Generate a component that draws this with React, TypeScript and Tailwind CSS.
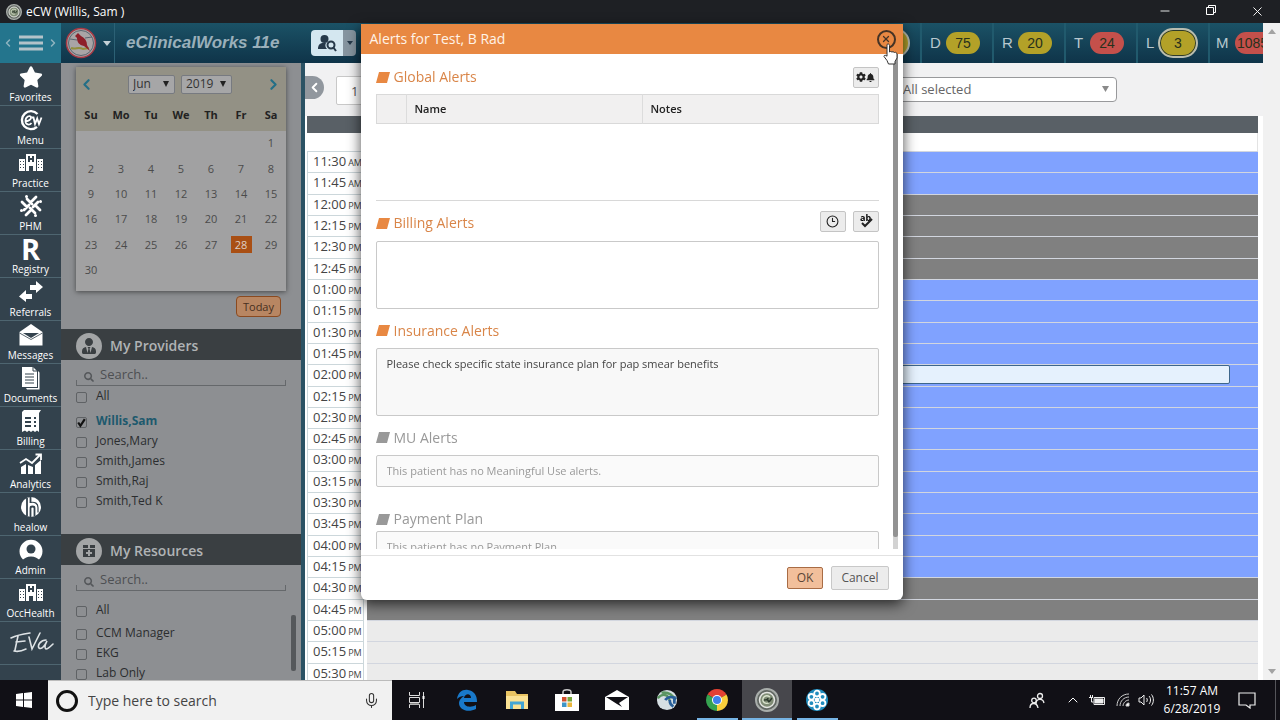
import type { ReactNode } from 'react';
import { FaStar, FaSearch, FaUserTie, FaBell, FaCog } from 'react-icons/fa';
import { ChevronLeft, ChevronRight, Mic, Minus, X, Clock3, ChevronUp } from 'lucide-react';

const days = ['Su', 'Mo', 'Tu', 'We', 'Th', 'Fr', 'Sa'];
const dates = Array.from({ length: 42 }, (_, i) => (i >= 6 && i < 36 ? i - 5 : 0));

const slotColors = { open: 'bg-[#80a2ff]', closed: 'bg-[#808080]', off: 'bg-[#ebebeb]' };

type Slot = { time: string; half: string; kind: keyof typeof slotColors };

// Quarter-hour slots from 11:30 AM
const slots: Slot[] = Array.from({ length: 25 }, (_, i) => {
  const minutes = 690 + i * 15;
  const hour = Math.floor(minutes / 60);
  const shown = hour > 12 ? hour - 12 : hour;
  const kind = i < 2 ? 'open' : i < 6 ? 'closed' : i < 20 ? 'open' : i < 22 ? 'closed' : 'off';
  return {
    time: `${String(shown).padStart(2, '0')}:${String(minutes % 60).padStart(2, '0')}`,
    half: hour < 12 ? 'AM' : 'PM',
    kind,
  };
});

const HospitalIcon = () => (
  <svg viewBox="0 0 24 20" className="h-5 w-6" fill="#fff">
    <path fillRule="evenodd" d="M7 1h10v17h-3v-5h-4v5H7zM9 3v6h2V7h2v2h2V3h-2v2h-2V3z" />
    <path fillRule="evenodd" d="M0 6h6v12H0zM1 8v1h1V8zm3 0v1h1V8zM1 11v1h1v-1zm3 0v1h1v-1zM1 14v1h1v-1zm3 0v1h1v-1zM18 6h6v12h-6zm1 2v1h1V8zm3 0v1h1V8zm-3 3v1h1v-1zm3 0v1h1v-1zm-3 3v1h1v-1zm3 0v1h1v-1z" />
  </svg>
);

const MenuLogo = () => (
  <svg viewBox="0 0 24 22" className="h-[22px] w-6" fill="none" stroke="#fff">
    <path strokeWidth="2.4" d="M18.500 5A9 9 0 1 0 18 17.800" />
    <path strokeWidth="1.8" d="M6.500 12.500c3-.5 6-2 5.500-4.500-1-2-5.500-.5-5.500 4 0 4 4 4.500 6 2" />
    <path strokeWidth="1.8" d="M12.500 8.500h2l1.500 6.500 2.200-5.500 1.800 5.500L22.500 8.500" />
  </svg>
);

const PhmIcon = () => (
  <svg viewBox="0 0 24 24" className="h-6 w-6" stroke="#fff" strokeWidth="2.8" strokeLinecap="round">
    <path d="M8 5l5 5M17 3l-5 5M19 8l-5 5M21 16l-5-5M16 19l-5-5M7 21l5-5M5 16l5-5M3 8l5 5" />
    <path strokeWidth="3" d="M7.500 2.500h.01M21.500 7.500h.01M16.500 21.500h.01M2.500 16.500h.01" />
  </svg>
);

const ReferralsIcon = () => (
  <svg viewBox="0 0 24 22" className="h-[22px] w-6" fill="#fff">
    <path d="M11 4h6V0l7 6-7 6V9h-6zM13 13H7V9l-7 6.500L7 21v-3h6z" />
  </svg>
);

const MessagesIcon = () => (
  <svg viewBox="0 0 24 22" className="h-[22px] w-6" fill="#fff">
    <path d="M.5 8L12 0l11.500 8v13.500H.5z" />
    <path d="M4 9h16l-8 5z" fill="#33424d" />
    <path d="M.5 9L12 15.500 23.500 9" fill="none" stroke="#33424d" strokeWidth=".8" />
  </svg>
);

const DocumentsIcon = () => (
  <svg viewBox="0 0 20 24" className="h-6 w-5" fill="#fff">
    <path d="M5 22h12V5l1.500 1.500V23.500H6zM1 1h11l4 4v16H1z" />
    <path stroke="#33424d" strokeWidth="1" d="M4 8h9M4 11h9M4 14h9M4 17h9M12 1v4h4" fill="none" />
  </svg>
);

const BillingIcon = () => (
  <svg viewBox="0 0 22 24" className="h-6 w-[22px]" fill="#fff">
    <path d="M4 1h17l-2 3v19l-2-1.500-2 1.500-2-1.500-2 1.500-2-1.500L7 23l-2-1.500L2 23V3z" />
    <path stroke="#33424d" strokeWidth="2" d="M5 9h6M5 13h6M5 17h6M14 9h2M14 13h2M14 17h2" />
  </svg>
);

const AnalyticsIcon = () => (
  <svg viewBox="0 0 24 24" className="h-6 w-6" fill="#fff">
    <path d="M2 15l5-3v10H2zM9 13l5 2v7H9zM16 13l6-5v14h-6z" />
    <path d="M1 11l6-4 6 4 8-8M16.500 2.500H22V8" fill="none" stroke="#fff" strokeWidth="1.800" />
  </svg>
);

const HealowIcon = () => (
  <svg viewBox="0 0 22 22" className="h-[22px] w-[22px]">
    <circle cx="11" cy="11" r="10" fill="#fff" />
    <path d="M7 2v18M10.500 1v6M10.500 21v-9c0-2 4-2 4 0v8" fill="none" stroke="#33424d" strokeWidth="1.800" />
    <path d="M10 6.500c5-1 8 1 8 5v5" fill="none" stroke="#33424d" strokeWidth="1.200" />
  </svg>
);

const AdminIcon = () => (
  <svg viewBox="0 0 24 22" className="h-[22px] w-6">
    <path d="M4 20.500A11.500 11.500 0 1 1 20 20.500c-2-1.500-4-3-8-3s-6 1.500-8 3z" fill="#fff" />
    <circle cx="12" cy="10" r="4.500" fill="#33424d" />
  </svg>
);

const EvaIcon = () => (
  <svg viewBox="0 0 46 24" className="h-6 w-[46px]" fill="none" stroke="#dde2e5" strokeWidth="1.600" strokeLinecap="round">
    <path d="M3 7C9 4 15 3 22 2M10 5L7 19M8 11l9-1M6 20c4 1 8 0 12-2M21 6l3 12L32 2M38 9c-5 0-9 5-7 8 3 2 6-3 8-7-2 4-3 7-1 8 2 0 4-2 7-5" />
  </svg>
);

const navItems: { label: string; icon: ReactNode }[] = [
  { label: 'Favorites', icon: <FaStar className="h-6 w-6 text-white" /> },
  { label: 'Menu', icon: <MenuLogo /> },
  { label: 'Practice', icon: <HospitalIcon /> },
  { label: 'PHM', icon: <PhmIcon /> },
  { label: 'Registry', icon: <span className="text-[29px] leading-6 font-bold">R</span> },
  { label: 'Referrals', icon: <ReferralsIcon /> },
  { label: 'Messages', icon: <MessagesIcon /> },
  { label: 'Documents', icon: <DocumentsIcon /> },
  { label: 'Billing', icon: <BillingIcon /> },
  { label: 'Analytics', icon: <AnalyticsIcon /> },
  { label: 'healow', icon: <HealowIcon /> },
  { label: 'Admin', icon: <AdminIcon /> },
  { label: 'OccHealth', icon: <HospitalIcon /> },
];

const EcwBall = ({ className }: { className: string }) => (
  <svg viewBox="0 0 24 24" className={className} fill="none">
    <circle cx="12" cy="12" r="11" fill="#626863" stroke="#a9aeab" strokeWidth="2" />
    <circle cx="12" cy="12" r="7.500" fill="#7f8c75" stroke="#e4e6e2" strokeWidth="1.500" />
    <path d="M15 9c-4-3-8 0-7 4 1 3 5 3 7 1" stroke="#dbe5cf" strokeWidth="1.300" />
    <path d="M9 12c3 0 4-1 4-2M12 11l2 3 3-4" stroke="#2d3a2d" strokeWidth="1.500" />
  </svg>
);

function TitleBar() {
  return (
    <div className="flex h-[23px] shrink-0 items-center bg-[#1e2024] pl-1.5 text-white">
      <EcwBall className="h-4 w-4" />
      <span className="ml-1 text-xs">eCW (Willis, Sam )</span>
      <div className="ml-auto flex">
        <button aria-label="Minimize" className="flex w-[46px] justify-center"><Minus size={14} strokeWidth={1.5} /></button>
        <button aria-label="Restore" className="flex w-[46px] justify-center">
          <svg viewBox="0 0 12 12" className="h-3 w-3" fill="none" stroke="#fff"><path d="M1.500 3.500h7v7h-7zM3.500 3.500v-2h7v7h-2" /></svg>
        </button>
        <button aria-label="Close window" className="flex w-[46px] justify-center"><X size={15} strokeWidth={1.5} /></button>
      </div>
    </div>
  );
}

const counters = [
  { letter: 'D', value: '75', color: 'bg-[#b3a128]' },
  { letter: 'R', value: '20', color: 'bg-[#b3a128]' },
  { letter: 'T', value: '24', color: 'bg-[#c4504b]' },
  { letter: 'L', value: '3', color: 'bg-[#b3a128]', ring: true },
];

function Header() {
  return (
    <header className="flex h-10 shrink-0 bg-linear-to-b from-[#1b5266] to-[#0f3449] font-['Liberation_Sans',sans-serif]">
      <button aria-label="Toggle menu" className="flex w-[61px] shrink-0 items-center justify-between bg-[#24758d] px-0.5 text-[#8fb4c0]">
        <ChevronLeft size={12} strokeWidth={3} />
        <svg viewBox="0 0 24 16" className="h-4 w-6" stroke="#b4c3c9" strokeWidth="3"><path d="M0 2h24M0 8h24M0 14h24" /></svg>
        <ChevronRight size={12} strokeWidth={3} />
      </button>
      <button aria-label="Practice logo" className="flex w-[54px] shrink-0 items-center gap-1.5 border-r border-[#2c6175] pl-1">
        <svg viewBox="0 0 32 32" className="h-8 w-8" fill="none">
          <circle cx="16" cy="16" r="14.500" fill="#a9a5a6" stroke="#a83a45" strokeWidth="1.500" />
          <circle cx="16" cy="16" r="12.500" stroke="#596570" />
          <path d="M6 21c5 2 7-2 12 1l6-1" stroke="#928f3c" strokeWidth="2" />
          <path d="M5 12l7 1M20 11l7-1" stroke="#596570" />
          <path d="M10 9l3-3 3 3c4 2 6 5 6 9l3 6-6-5c-5-1-7-4-7-8z" fill="#8e1f29" />
        </svg>
        <svg viewBox="0 0 8 5" className="h-[5px] w-2" fill="#c4d0d6"><path d="M0 0h8L4 5z" /></svg>
      </button>
      <h1 className="my-auto ml-[11px] w-[150px] shrink-0 text-[17px] font-bold whitespace-nowrap text-[#9aafba] italic">eClinicalWorks 11e</h1>
      <div className="my-auto ml-[35px] flex h-[26px] shrink-0">
        <button aria-label="Find patient" className="flex w-8 items-center justify-center rounded-l-sm bg-[#d4e7f0]">
          <svg viewBox="0 0 20 18" className="h-[18px] w-5" fill="#26394a">
            <circle cx="7.500" cy="5" r="4" />
            <path d="M1 15c0-4 2-6 5-6h3c-1 2-1 4 1 6z" />
            <circle cx="14" cy="11" r="3.500" fill="none" stroke="#26394a" strokeWidth="2" />
            <path d="M16 13l3 4" stroke="#26394a" strokeWidth="2" />
          </svg>
        </button>
        <button aria-label="Patient options" className="flex w-[13px] items-center justify-center rounded-r-sm bg-[#8695a0]">
          <svg viewBox="0 0 6 4" className="h-1 w-1.5" fill="#26394a"><path d="M0 0h6L3 4z" /></svg>
        </button>
      </div>
      <div className="ml-auto flex shrink-0 text-sm">
        <div className="flex w-[72px] items-center justify-end pr-2.5">
          <span className="h-[30px] w-10 rounded-full border-2 border-[#b9bdb0] bg-[#b3a128]" />
        </div>
        {counters.map((c) => (
          <button key={c.letter} className="flex w-[72px] items-center border-l-2 border-[#215a6d] pl-2 text-[#b9c8cf]">
            <span className="w-4 text-left text-[15px]">{c.letter}</span>
            {c.ring ? (
              <span className="-ml-1 flex h-[30px] w-10 items-center justify-center rounded-full border-2 border-[#b9bdb0] bg-[#b3a128] text-[#28301c] ring-1 ring-[#2d3a2a] ring-inset">{c.value}</span>
            ) : (
              <span className={`flex h-[22px] w-[34px] items-center justify-center rounded-full text-[#28301c] ${c.color}`}>{c.value}</span>
            )}
          </button>
        ))}
        <button className="flex w-[55px] items-center overflow-hidden border-l-2 border-[#215a6d] pl-1.5 text-[#b9c8cf]">
          <span className="w-[19px] shrink-0 text-left text-[15px]">M</span>
          <span className="flex h-[22px] w-10 shrink-0 items-center rounded-l-full bg-[#c4504b] pl-0.5 text-[#28301c]">1085</span>
        </button>
      </div>
    </header>
  );
}

function SideNav() {
  return (
    <nav className="flex w-[61px] shrink-0 flex-col overflow-hidden bg-[#33424d] text-white">
      {navItems.map((item) => (
        <a key={item.label} href="#" className="flex h-[43px] shrink-0 flex-col items-center justify-end border-b border-[#4e6570]">
          <span className="flex h-6 items-center">{item.icon}</span>
          <span className="text-[10px] leading-4">{item.label}</span>
        </a>
      ))}
      <a href="#" aria-label="EVA" className="flex h-[43px] shrink-0 items-center justify-center border-b border-[#4e6570]"><EvaIcon /></a>
    </nav>
  );
}

function Calendar() {
  return (
    <div className="mx-[15px] mt-1 bg-[#a1a1a2] shadow-[0_1px_5px_rgba(0,0,0,0.5)]">
      <div className="h-16 bg-[#939185]">
        <div className="flex h-8 items-center pt-0.5 pr-1 pl-0.5 text-[#236f87]">
          <button aria-label="Previous month"><ChevronLeft size={17} strokeWidth={3} /></button>
          <PickerSelect label="Month" value="Jun" className="ml-auto w-[47px]" />
          <PickerSelect label="Year" value="2019" className="mr-auto ml-1.5 w-[51px]" />
          <button aria-label="Next month"><ChevronRight size={17} strokeWidth={3} /></button>
        </div>
        <div className="grid h-8 grid-cols-7 items-center text-center text-[11px] font-bold text-[#222]">
          {days.map((d) => <span key={d}>{d}</span>)}
        </div>
      </div>
      <div className="grid h-[152px] grid-cols-7 grid-rows-6 place-items-center text-[11px] text-[#4b4b4b]">
        {dates.map((d, i) =>
          d ? (
            <button key={i} className={d === 28 ? 'h-[17px] w-[21px] bg-[#a94f14] text-[#ded0c5]' : 'h-[17px] w-[21px]'}>{d}</button>
          ) : (
            <span key={i} />
          ),
        )}
      </div>
      <div className="h-2" />
    </div>
  );
}

function PickerSelect({ label, value, className }: { label: string; value: string; className: string }) {
  return (
    <div className={`relative ${className}`}>
      <select aria-label={label} className="block h-[19px] w-full appearance-none rounded-xs border border-[#777a80] bg-[#a6a6a7] pl-1 text-xs leading-4 text-[#333]">
        <option>{value}</option>
      </select>
      <svg viewBox="0 0 6 6" className="pointer-events-none absolute top-1.5 right-1.5 h-1.5 w-1.5" fill="#222"><path d="M0 0h6L3 6z" /></svg>
    </div>
  );
}

function PanelTitle({ icon, children }: { icon: ReactNode; children: ReactNode }) {
  return (
    <div className="flex h-[31px] shrink-0 items-center bg-[#3a3f42] pt-0.5 pl-[15px]">
      <span className="flex h-[26px] w-[26px] items-center justify-center rounded-full bg-[#a3a5a6] text-[#3a3f42]">{icon}</span>
      <h2 className="ml-2 text-sm font-semibold text-[#b0b3b5]">{children}</h2>
    </div>
  );
}

function SearchBox({ label }: { label: string }) {
  return (
    <div className="mx-[15px] mt-1 h-[22px] shrink-0">
      <div className="flex h-[22px] items-center pl-2">
        <FaSearch size={10} className="mt-1 text-[#55585b]" />
        <input aria-label={label} placeholder="Search.." className="ml-1.5 w-40 bg-transparent text-[13px] text-[#333] outline-none placeholder:text-[#4d5053]" />
      </div>
      <div className="-mt-1.5 h-1.5 border-x border-b border-[#65686b]" />
    </div>
  );
}

function CheckRow({ label, checked, tall }: { label: string; checked?: boolean; tall?: boolean }) {
  return (
    <label className={`flex shrink-0 items-center gap-[9px] pl-[15px] ${tall ? 'h-[26px]' : 'h-5'}`}>
      <span className="relative mt-0.5 h-[11px] w-[11px]">
        <input type="checkbox" defaultChecked={checked} className="block h-[11px] w-[11px] appearance-none rounded-xs border border-[#5f6265]" />
        {checked && <svg viewBox="0 0 10 10" className="pointer-events-none absolute inset-0" fill="none" stroke="#111" strokeWidth="2"><path d="M2 5l2 3 4-6" /></svg>}
      </span>
      <span className={checked ? 'text-xs font-bold text-[#1d596d]' : 'text-xs text-[#2b2d2f]'}>{label}</span>
    </label>
  );
}

function LeftPanel() {
  return (
    <aside className="flex w-60 shrink-0 flex-col overflow-hidden bg-[#8d8f92]">
      <div className="h-[266px] shrink-0">
        <Calendar />
        <div className="flex justify-end pt-[5px] pr-5">
          <button className="h-[21px] rounded-sm border border-[#8a4a20] bg-[#b88662] px-1.5 text-[11px] leading-4 text-[#47301f]">Today</button>
        </div>
      </div>
      <PanelTitle icon={<FaUserTie size={16} />}>My Providers</PanelTitle>
      <div className="flex h-[174px] shrink-0 flex-col">
        <SearchBox label="Search providers" />
        <CheckRow label="All" />
        <div className="h-[5px] shrink-0" />
        <CheckRow label="Willis,Sam" checked />
        <CheckRow label="Jones,Mary" />
        <CheckRow label="Smith,James" />
        <CheckRow label="Smith,Raj" />
        <CheckRow label="Smith,Ted K" />
      </div>
      <PanelTitle
        icon={
          <svg viewBox="0 0 16 16" className="h-4 w-4" fill="currentColor">
            <path fillRule="evenodd" d="M2 2h5v3H2zM9 2h5v3H9zM2 6h12v8H2zm5 1v2H5v2h2v2h2v-2h2V9H9V7z" />
          </svg>
        }
      >
        My Resources
      </PanelTitle>
      <SearchBox label="Search resources" />
      <div className="flex justify-between overflow-hidden pt-1.5 pr-[5px]">
        <div className="flex flex-col">
          <CheckRow label="All" tall />
          <CheckRow label="CCM Manager" />
          <CheckRow label="EKG" />
          <CheckRow label="Lab Only" />
        </div>
        <div className="mt-[18px] h-14 w-[5px] rounded-xs bg-[#55585b]" />
      </div>
    </aside>
  );
}

function Schedule() {
  return (
    <main className="flex min-w-0 flex-1 flex-col border-l-4 border-[#2b5264] bg-white">
      <div className="flex h-[53px] shrink-0 items-center bg-[#f1f1f2]">
        <button aria-label="Collapse panel" className="mb-1 flex h-[23px] w-[19px] items-center justify-center rounded-r-full bg-[#91979e] text-white"><ChevronLeft size={15} strokeWidth={3} /></button>
        <input aria-label="Days" defaultValue="1" className="mt-0.5 ml-3 h-[29px] w-14 rounded-xs border border-[#c8c8c8] bg-white pl-3.5 text-[13px] text-[#555]" />
        <div className="relative mr-[146px] ml-auto w-[260px]">
          <select aria-label="Visit types" className="block h-[25px] w-full appearance-none rounded-sm border border-[#98999b] bg-white pl-[45px] text-[13px] text-[#666]">
            <option>All selected</option>
          </select>
          <svg viewBox="0 0 7 6" className="pointer-events-none absolute top-[9px] right-2 h-1.5 w-[7px]" fill="#8a8a8a"><path d="M0 0h7L3.500 6z" /></svg>
        </div>
      </div>
      <div className="mr-[5px] ml-0.5 flex min-h-0 flex-1 flex-col">
        <div className="h-[17px] shrink-0 bg-[#596066]" />
        <div className="h-[18px] shrink-0 border-r border-[#e3e3e3]" />
        <div className="min-h-0 flex-1 overflow-hidden">
          <div className="grid h-[533px] auto-rows-fr grid-cols-[60px_1fr]">
            {slots.map((slot) => (
              <div key={slot.time} className="contents">
                <div className="mr-[3px] border-x border-t border-[#ccd7db] pl-[5px] text-[13px] leading-[18px] whitespace-nowrap text-[#444]">
                  {slot.time}<span className="ml-0.5 text-[9px]">{slot.half}</span>
                </div>
                <div className={`border-t border-[#d2d6df] ${slotColors[slot.kind]}`}>
                  {slot.time === '02:00' && <div className="mr-7 h-[19px] rounded-xs border border-[#3d668c] bg-[#e5f1fd]" />}
                </div>
              </div>
            ))}
          </div>
        </div>
      </div>
    </main>
  );
}

function SectionTitle({ id, muted, children }: { id?: string; muted?: boolean; children: ReactNode }) {
  return (
    <div className={`flex items-center gap-1 text-sm leading-5 ${muted ? 'text-[#999]' : 'text-[#d98548]'}`}>
      <svg viewBox="0 0 14 11" className="h-[11px] w-3.5" fill={muted ? '#999' : '#e88842'}><path d="M3 0h11l-3 11H0z" /></svg>
      <label htmlFor={id}>{children}</label>
    </div>
  );
}

const toolButton = 'flex h-[21px] w-[26px] items-center justify-center rounded-xs border border-[#c4c4c4] bg-[#ececec] text-[#222]';

function AlertsDialog() {
  return (
    <div className="pointer-events-none fixed inset-x-0 top-6 flex justify-center pr-[17px]">
      <div role="dialog" aria-label="Alerts for Test, B Rad" className="pointer-events-auto relative w-[542px] rounded-b-md bg-white shadow-[0_4px_14px_rgba(0,0,0,0.7)]">
        <div className="flex h-[30px] items-center justify-between bg-[#e88842] pr-[7px] pl-[9px]">
          <h2 className="text-sm text-[#fff3e8]">Alerts for Test, B Rad</h2>
          <button aria-label="Close" className="flex h-[19px] w-[19px] items-center justify-center rounded-full border-2 border-[#453325] text-[#453325]"><X size={10} strokeWidth={3} /></button>
        </div>
        <div className="flex h-[495px] overflow-hidden">
          <div className="min-w-0 flex-1 pr-1.5 pl-[15px]">
            <div className="flex h-10 items-center justify-between pt-1.5">
              <SectionTitle>Global Alerts</SectionTitle>
              <button aria-label="Configure alerts" className={toolButton}><FaCog size={10} /><FaBell size={9} /></button>
            </div>
            <div className="h-[107px] border-b border-[#d8d8d8]">
              <table className="w-full table-fixed border border-[#d9d9d9] bg-[#f1f0f0] text-left text-[11px] text-[#222]">
                <thead>
                  <tr className="h-[29px]">
                    <th className="w-[30px]" aria-label="Select" />
                    <th className="w-[236px] border-l border-[#dcdcdc] pl-2 font-semibold">Name</th>
                    <th className="border-l border-[#dcdcdc] pl-2 font-semibold">Notes</th>
                  </tr>
                </thead>
              </table>
            </div>
            <div className="flex h-10 items-center justify-between pt-1">
              <SectionTitle id="billing">Billing Alerts</SectionTitle>
              <div className="mb-1 flex gap-[7px]">
                <button aria-label="Time stamp" className={toolButton}><Clock3 size={13} /></button>
                <button aria-label="Check spelling" className={toolButton}>
                  <svg viewBox="0 0 14 14" className="h-3.5 w-3.5"><text x="1" y="7" fontSize="9" fontWeight="700">ab</text><path d="M3 9l3 3 7-7" fill="none" stroke="#222" strokeWidth="2" /></svg>
                </button>
              </div>
            </div>
            <textarea id="billing" className="block h-[68px] w-full resize-none rounded-xs border border-[#c9c9c9] bg-white px-2.5 py-2 text-[11px]" />
            <div className="flex h-[39px] items-center pt-1"><SectionTitle id="insurance">Insurance Alerts</SectionTitle></div>
            <textarea id="insurance" readOnly defaultValue="Please check specific state insurance plan for pap smear benefits" className="block h-[68px] w-full resize-none rounded-xs border border-[#c9c9c9] bg-[#f8f8f8] px-2.5 py-[7px] text-[11px] leading-4 text-[#444]" />
            <div className="flex h-[39px] items-center pt-1"><SectionTitle id="mu" muted>MU Alerts</SectionTitle></div>
            <input id="mu" readOnly value="This patient has no Meaningful Use alerts." className="block h-8 w-full rounded-xs border border-[#c9c9c9] bg-[#fafafa] px-2.5 pb-0.5 text-[11px] text-[#999]" />
            <div className="flex h-11 items-end pb-0.5"><SectionTitle id="plan" muted>Payment Plan</SectionTitle></div>
            <input id="plan" readOnly value="This patient has no Payment Plan" className="block h-8 w-full rounded-xs border border-[#c9c9c9] bg-[#fafafa] px-2.5 pb-0.5 text-[11px] text-[#999]" />
          </div>
          <div className="mr-[5px] ml-2 w-[5px] shrink-0 bg-[#d2d2d2]"><div className="h-[483px] rounded-b-xs bg-[#929292]" /></div>
        </div>
        <div className="mt-1.5 flex h-[45px] items-center justify-end gap-2 border-t border-[#e2e2e2] pr-3.5">
          <button className="h-[22px] rounded-xs border border-[#a86c45] bg-[#f2bf9b] px-[9px] text-xs leading-5 text-[#5c4636]">OK</button>
          <button className="h-6 rounded-xs border border-[#c8c8c8] bg-[#ececec] px-[9px] text-xs leading-5 text-[#555]">Cancel</button>
        </div>
        {/* pointer resting on the close button */}
        <svg viewBox="0 0 16 22" className="absolute top-[19px] right-1 h-[22px] w-4" fill="#fff" stroke="#333" strokeWidth="1">
          <path d="M4 1.500c1-1 2.500-.5 2.500 1V9l1-.5 1.500.5 1-.3 1.500.8 1-.2 1.500 1.200V15l-2 3.500V21H5.500L4 17.500l-3-4c0-1.500 1.500-1.800 3-.3z" />
        </svg>
      </div>
    </div>
  );
}

const WinStore = () => (
  <svg viewBox="0 0 24 24" className="h-6 w-6">
    <path d="M8 8V4c0-3 8-3 8 0v4" fill="none" stroke="#ccc" strokeWidth="1.500" />
    <path fill="#fff" d="M0 6h24v17H0z" />
    <path fill="#d1502f" d="M7 9h4.500v4.500H7z" /><path fill="#76a63a" d="M12.500 9H17v4.500h-4.500z" />
    <path fill="#3f95c7" d="M7 14.500h4.500V19H7z" /><path fill="#eab63d" d="M12.500 14.500H17V19h-4.500z" />
  </svg>
);

const taskApps: { name: string; icon: ReactNode; state?: 'open' | 'active' }[] = [
  {
    name: 'Task View',
    icon: <svg viewBox="0 0 18 16" className="h-4 w-[18px]" fill="none" stroke="#ddd"><path d="M1.500 0v3.500h10V0M1.500 5.500h10v5h-10zM1.500 16v-3.500h10V16M15.500 0v16" /><path fill="#888" stroke="none" d="M2 11h9v1.500H2z" /><path stroke="#fff" strokeWidth="2" d="M15.500 4v3" /></svg>,
  },
  {
    name: 'Edge',
    icon: <svg viewBox="0 0 22 22" className="h-[22px] w-[22px]" fill="#1979ca"><path d="M1 10C2 3 7 0 12 1c6 1 9 5 9 12H8c0 5 7 6 12 3v4C12 24 3 21 3 14c0-3 2-5 5-7-3 0-5 1-7 3zM8 9h7c0-5-6-5-7 0z" /></svg>,
  },
  {
    name: 'File Explorer',
    icon: <svg viewBox="0 0 24 20" className="h-5 w-6"><path fill="#e9c463" d="M1 1h9l2 3h11v15H1z" /><path fill="#fbe294" d="M1 6h22v13H1z" /><path fill="none" stroke="#44a6d4" strokeWidth="3" d="M6.500 19v-6h11v6" /></svg>,
  },
  { name: 'Store', icon: <WinStore /> },
  {
    name: 'Mail',
    icon: <svg viewBox="0 0 24 20" className="h-5 w-6"><path fill="#fff" d="M0 7l12-7 12 7v13H0z" /><path fill="#111016" d="M1 7h22l-9 6 3 4-5-3z" /></svg>,
  },
  {
    name: 'Globe',
    icon: <svg viewBox="0 0 24 24" className="h-[22px] w-[22px]"><circle cx="12" cy="12" r="11" fill="#d6dfe3" /><path d="M2 10c5-6 12-4 13 3M6 4c7-1 12 2 15 8" fill="none" stroke="#5a9460" strokeWidth="2.500" /><path d="M10 12c3-4 8-4 12-1M15 12c0 4 2 6 4 7M20 8v8" fill="none" stroke="#285f99" strokeWidth="3" /></svg>,
  },
  {
    name: 'Chrome',
    state: 'open',
    icon: (
      <svg viewBox="0 0 24 24" className="h-6 w-6">
        <path fill="#e34133" d="M12 12L2.500 6.500a11 11 0 0 1 19 0z" /><path fill="#f9cf3c" d="M12 12l9.500-5.500A11 11 0 0 1 12 23z" />
        <path fill="#36a350" d="M12 12v11A11 11 0 0 1 2.500 6.500z" /><circle cx="12" cy="12" r="5" fill="#fff" /><circle cx="12" cy="12" r="4" fill="#4081ec" />
      </svg>
    ),
  },
  { name: 'eClinicalWorks', state: 'active', icon: <EcwBall className="h-6 w-6" /> },
  {
    name: 'Meeting',
    state: 'open',
    icon: (
      <svg viewBox="0 0 24 24" className="h-6 w-6" fill="none" stroke="#fff" strokeWidth="1.800">
        <circle cx="12" cy="12" r="11" fill="#1f8cbe" stroke="none" />
        <circle cx="12" cy="5.500" r="2.800" /><circle cx="17.600" cy="8.800" r="2.800" /><circle cx="17.600" cy="15.200" r="2.800" />
        <circle cx="12" cy="18.500" r="2.800" /><circle cx="6.400" cy="15.200" r="2.800" /><circle cx="6.400" cy="8.800" r="2.800" />
        <circle cx="12" cy="12" r="1.500" fill="#fff" />
      </svg>
    ),
  },
];

function Taskbar() {
  return (
    <footer className="flex h-10 shrink-0 bg-[#111016] text-white">
      <button aria-label="Start" className="flex w-12 shrink-0 items-center justify-center">
        <svg viewBox="0 0 16 16" className="h-4 w-4" fill="#fff"><path d="M0 2l7-1v6.500H0zM8 1l8-1v7.500H8zM0 8.500h7V15l-7-1zM8 8.500h8V16l-8-1z" /></svg>
      </button>
      <div className="flex w-[344px] shrink-0 items-center border-t border-[#bbb] bg-[#f1f1f1] px-2 text-[#333]">
        <span className="h-[22px] w-[22px] rounded-full border-3 border-[#111]" />
        <input aria-label="Search Windows" placeholder="Type here to search" className="ml-2.5 min-w-0 flex-1 bg-transparent text-sm outline-none placeholder:text-[#444]" />
        <Mic size={17} strokeWidth={1.5} className="mr-1" />
      </div>
      {taskApps.map((app) => (
        <button key={app.name} aria-label={app.name} className={`flex w-[50px] shrink-0 flex-col items-center ${app.state === 'active' ? 'bg-[#47474c]' : ''}`}>
          <span className="flex flex-1 items-center">{app.icon}</span>
          {app.state && <span className={`-mt-0.5 h-0.5 bg-[#76b4e4] ${app.state === 'active' ? 'w-full' : 'w-[41px]'}`} />}
        </button>
      ))}
      <div className="ml-auto flex shrink-0 items-center">
        <svg viewBox="0 0 16 16" className="h-4 w-4" fill="none" stroke="#eee" strokeWidth="1.300"><circle cx="11" cy="4" r="2.500" /><path d="M7 12c0-6 7-6 8-1" /><circle cx="5" cy="8.500" r="2.300" /><path d="M1 16c0-6 7-6 8 0" /></svg>
        <ChevronUp size={16} strokeWidth={1.5} className="ml-5" />
        <svg viewBox="0 0 17 12" className="ml-2 h-3 w-[17px]" fill="none" stroke="#eee"><path d="M5 3.500h10.500v7H5zM0 3.500h4M1.500 1v2M3.500 1v2M2.500 4v4h2" /><path d="M6 5h8v4H6z" fill="#eee" /></svg>
        <svg viewBox="0 0 14 14" className="ml-2.5 h-3.5 w-3.5" fill="none" stroke="#ccc"><path d="M1 13C1 6 6 1 13 1M4 13c0-5 4-9 9-9M7 13c0-3 3-6 6-6" /><path d="M10 13c0-2 1-3 3-3v3z" fill="#fff" /></svg>
        <svg viewBox="0 0 16 14" className="ml-2 h-3.5 w-4" fill="none" stroke="#eee"><path d="M1 5h2l3-3v10L3 9H1zM8.500 5c1 1 1 3 0 4M11 3c2 2 2 6 0 8M13.500 1.500c2.500 3 2.500 8 0 11" /></svg>
        <div className="ml-1.5 w-16 text-center text-xs leading-[18px]"><div>11:57 AM</div><div>6/28/2019</div></div>
        <svg viewBox="0 0 18 17" className="ml-3.5 h-[17px] w-[18px]" fill="none" stroke="#eee" strokeWidth="1.200"><path d="M1 1h16v12h-5v3l-4-3H1z" /></svg>
        <span className="mr-1 ml-[19px] h-10 w-px bg-[#55555a]" />
      </div>
    </footer>
  );
}

export default function App() {
  return (
    <div className="flex h-screen flex-col overflow-hidden bg-white font-['Open_Sans',sans-serif]">
      <TitleBar />
      <div className="flex min-h-0 flex-1">
        <div className="flex min-w-0 flex-1 flex-col">
          <Header />
          <div className="flex min-h-0 flex-1">
            <SideNav />
            <LeftPanel />
            <Schedule />
          </div>
        </div>
        <div className="flex w-[17px] shrink-0 flex-col items-center justify-between bg-[#f1f1f1] py-1.5">
          <svg viewBox="0 0 8 5" className="h-[5px] w-2" fill="#a3a3a3"><path d="M0 5h8L4 0z" /></svg>
          <svg viewBox="0 0 8 5" className="h-[5px] w-2" fill="#a3a3a3"><path d="M0 0h8L4 5z" /></svg>
        </div>
      </div>
      <Taskbar />
      <AlertsDialog />
    </div>
  );
}
